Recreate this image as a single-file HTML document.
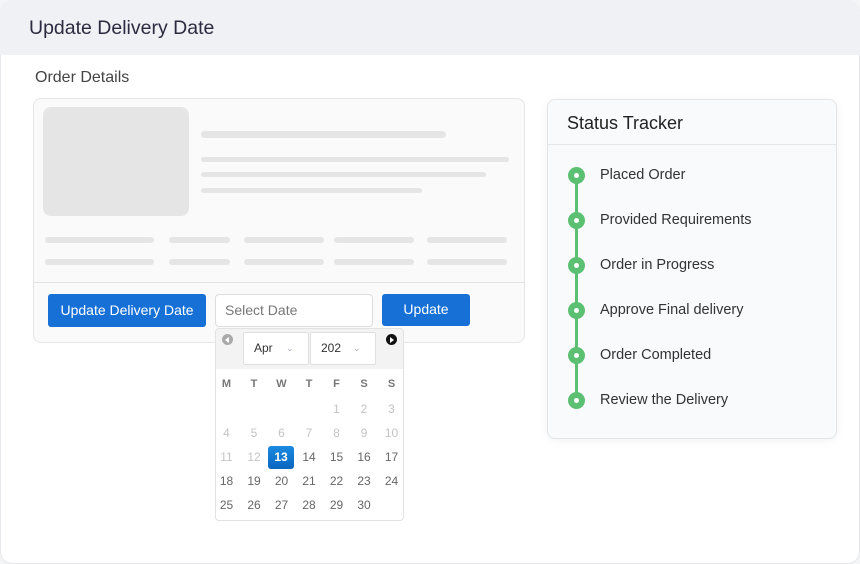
<!DOCTYPE html>
<html><head><style>
*{margin:0;padding:0;box-sizing:border-box}
body{width:860px;height:564px;background:#f4f5f7;font-family:"Liberation Sans",sans-serif;position:relative;overflow:hidden}
.a{position:absolute}
.card{left:0;top:0;width:860px;height:564px;background:#fff;border:1px solid #e6e7ea;border-radius:12px;overflow:hidden}
.hdr{left:0;top:0;width:860px;height:55px;background:#f0f1f5}
.bar{position:absolute;background:#e5e5e5;border-radius:4px}
.btn{position:absolute;background:#1670d6;color:#fff;border-radius:3px;font-size:14px;text-align:center}
.cal .d{position:absolute;width:27px;height:23px;text-align:center;font-size:12px;line-height:23px;color:#666;background:#fff;margin-left:-3px}
.cal .d.g{color:#c4c4c4}
.cal .h{position:absolute;width:27px;text-align:center;font-size:11px;font-weight:bold;color:#777;margin-left:-3px}
.dot{position:absolute;left:568px;width:17px;height:17px;border-radius:50%;background:#5cc072}
.dot:after{content:"";position:absolute;left:6px;top:6px;width:5px;height:5px;border-radius:50%;background:#fff}
.st{position:absolute;left:600px;font-size:14.5px;color:#333}
</style></head><body>
<div class="a card"></div>
<div class="a hdr" style="border-radius:12px 12px 0 0"></div>
<div class="a" style="left:29px;top:17px;font-size:19.5px;color:#2a2b40">Update Delivery Date</div>
<div class="a" style="left:35px;top:69px;font-size:16px;color:#444">Order Details</div>

<div class="a" style="left:33px;top:98px;width:492px;height:245px;background:#fafafa;border:1px solid #e5e5e5;border-radius:8px"></div>
<div class="a" style="left:34px;top:282px;width:490px;height:1px;background:#e2e2e2"></div>
<div class="bar" style="left:43px;top:107px;width:146px;height:109px;border-radius:8px"></div>
<div class="bar" style="left:201px;top:131px;width:245px;height:7px"></div>
<div class="bar" style="left:201px;top:157px;width:308px;height:5px"></div>
<div class="bar" style="left:201px;top:172px;width:285px;height:5px"></div>
<div class="bar" style="left:201px;top:188px;width:221px;height:5px"></div>
<div class="bar" style="left:45px;top:237px;width:109px;height:6px"></div>
<div class="bar" style="left:169px;top:237px;width:61px;height:6px"></div>
<div class="bar" style="left:244px;top:237px;width:80px;height:6px"></div>
<div class="bar" style="left:334px;top:237px;width:80px;height:6px"></div>
<div class="bar" style="left:427px;top:237px;width:80px;height:6px"></div>
<div class="bar" style="left:45px;top:259px;width:109px;height:6px"></div>
<div class="bar" style="left:169px;top:259px;width:61px;height:6px"></div>
<div class="bar" style="left:244px;top:259px;width:80px;height:6px"></div>
<div class="bar" style="left:334px;top:259px;width:80px;height:6px"></div>
<div class="bar" style="left:427px;top:259px;width:80px;height:6px"></div>

<div class="btn" style="left:48px;top:294px;width:158px;height:33px;line-height:33px">Update Delivery Date</div>
<div class="a" style="left:215px;top:294px;width:158px;height:33px;background:#fff;border:1px solid #ddd;border-radius:4px;font-size:14px;color:#777;line-height:31px;padding-left:9px">Select Date</div>
<div class="btn" style="left:382px;top:294px;width:88px;height:32px;line-height:31px">Update</div>

<div class="a cal" style="left:215px;top:328px;width:189px;height:193px;background:#fff;border:1px solid #e2e2e2;border-radius:4px;overflow:hidden">
 <div class="a" style="left:0;top:0;width:189px;height:40px;background:#f3f3f3"></div>
 <div class="a" style="left:6px;top:5px;width:11px;height:11px;border-radius:50%;background:#aaa"></div>
 <div class="a" style="left:9px;top:8px;width:0;height:0;border-top:3px solid transparent;border-bottom:3px solid transparent;border-right:4px solid #fff"></div>
 <div class="a" style="left:170px;top:5px;width:11px;height:11px;border-radius:50%;background:#111"></div>
 <div class="a" style="left:174px;top:8px;width:0;height:0;border-top:3px solid transparent;border-bottom:3px solid transparent;border-left:4px solid #fff"></div>
 <div class="a" style="left:27px;top:3px;width:66px;height:33px;background:#fff;border:1px solid #e0e0e0;border-radius:2px;font-size:12px;color:#333;line-height:31px;padding-left:10px">Apr<span style="color:#aab;position:absolute;left:42px;font-size:9px">&#8964;</span></div>
 <div class="a" style="left:94px;top:3px;width:66px;height:33px;background:#fff;border:1px solid #e0e0e0;border-radius:2px;font-size:12px;color:#333;line-height:31px;padding-left:10px">202<span style="color:#aab;position:absolute;left:42px;font-size:9px">&#8964;</span></div>
 <div class="h" style="left:0;top:49px">M</div><div class="h" style="left:27.5px;top:49px">T</div><div class="h" style="left:55px;top:49px">W</div><div class="h" style="left:82.5px;top:49px">T</div><div class="h" style="left:110px;top:49px">F</div><div class="h" style="left:137.5px;top:49px">S</div><div class="h" style="left:165px;top:49px">S</div>
 <div class="d g" style="left:110px;top:69px">1</div><div class="d g" style="left:137.5px;top:69px">2</div><div class="d g" style="left:165px;top:69px">3</div>
 <div class="d g" style="left:0;top:93px">4</div><div class="d g" style="left:27.5px;top:93px">5</div><div class="d g" style="left:55px;top:93px">6</div><div class="d g" style="left:82.5px;top:93px">7</div><div class="d g" style="left:110px;top:93px">8</div><div class="d g" style="left:137.5px;top:93px">9</div><div class="d g" style="left:165px;top:93px">10</div>
 <div class="d g" style="left:0;top:117px">11</div><div class="d g" style="left:27.5px;top:117px">12</div><div class="d" style="left:55px;top:117px;width:26px;height:23px;background:linear-gradient(#1a8ae0,#0a66c0);color:#fff;font-weight:bold;border-radius:3px">13</div><div class="d" style="left:82.5px;top:117px">14</div><div class="d" style="left:110px;top:117px">15</div><div class="d" style="left:137.5px;top:117px">16</div><div class="d" style="left:165px;top:117px">17</div>
 <div class="d" style="left:0;top:141px">18</div><div class="d" style="left:27.5px;top:141px">19</div><div class="d" style="left:55px;top:141px">20</div><div class="d" style="left:82.5px;top:141px">21</div><div class="d" style="left:110px;top:141px">22</div><div class="d" style="left:137.5px;top:141px">23</div><div class="d" style="left:165px;top:141px">24</div>
 <div class="d" style="left:0;top:165px">25</div><div class="d" style="left:27.5px;top:165px">26</div><div class="d" style="left:55px;top:165px">27</div><div class="d" style="left:82.5px;top:165px">28</div><div class="d" style="left:110px;top:165px">29</div><div class="d" style="left:137.5px;top:165px">30</div>
</div>

<div class="a" style="left:547px;top:99px;width:290px;height:340px;background:#f9fafc;border:1px solid #e3e5e8;border-radius:8px;box-shadow:0 2px 10px rgba(0,0,0,0.05)"></div>
<div class="a" style="left:548px;top:144px;width:288px;height:1px;background:#e3e5e8"></div>
<div class="a" style="left:567px;top:113px;font-size:18px;color:#222">Status Tracker</div>
<div class="a" style="left:575px;top:175px;width:3px;height:225px;background:#5cc072"></div>
<div class="dot" style="top:167px"></div><div class="st" style="top:167px">Placed Order</div>
<div class="dot" style="top:212px"></div><div class="st" style="top:212px">Provided Requirements</div>
<div class="dot" style="top:257px"></div><div class="st" style="top:257px">Order in Progress</div>
<div class="dot" style="top:302px"></div><div class="st" style="top:302px">Approve Final delivery</div>
<div class="dot" style="top:347px"></div><div class="st" style="top:347px">Order Completed</div>
<div class="dot" style="top:392px"></div><div class="st" style="top:392px">Review the Delivery</div>
</body></html>
